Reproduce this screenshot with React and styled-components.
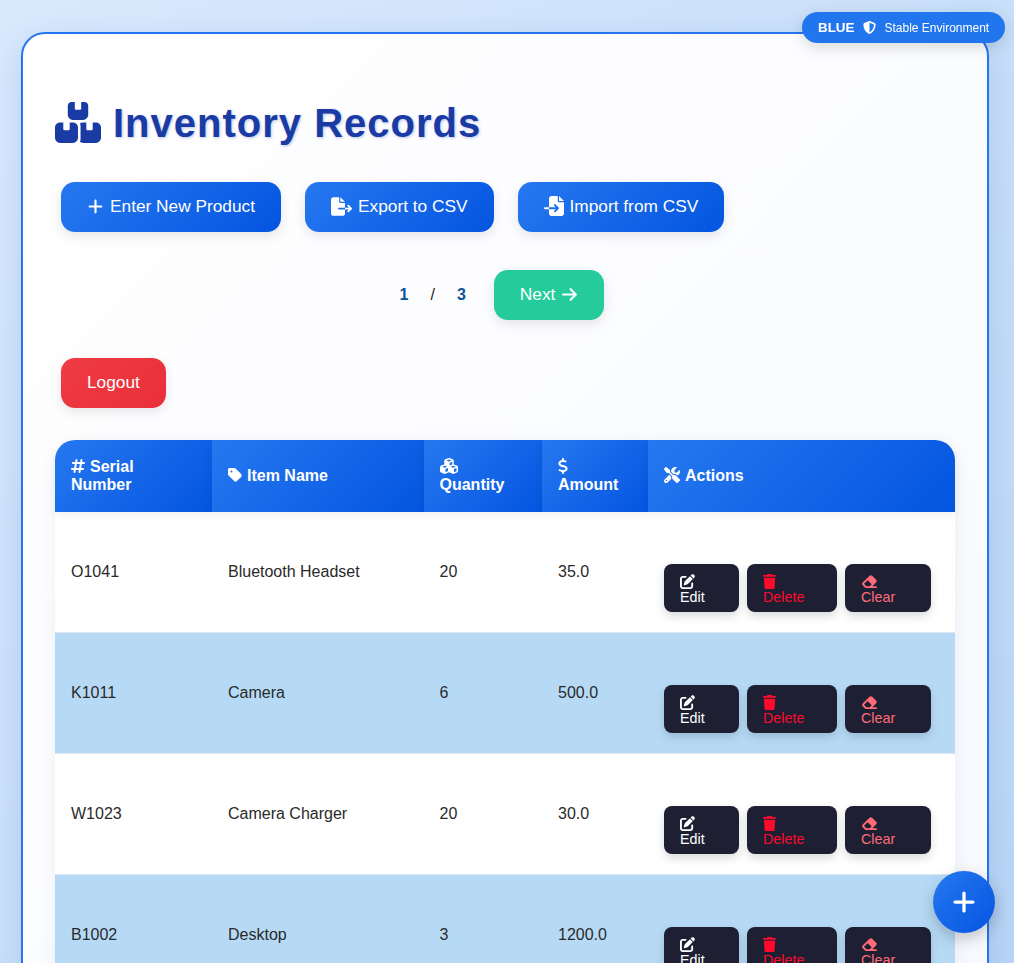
import React from "react";
import styled, { createGlobalStyle, css } from "styled-components";
import {
  FaBoxesStacked, FaPlus, FaFileExport, FaFileImport, FaArrowRight, FaHashtag, FaTag,
  FaCubes, FaDollarSign, FaScrewdriverWrench, FaPenToSquare, FaTrash, FaEraser, FaShieldHalved,
} from "react-icons/fa6";

const Global = createGlobalStyle`
  html, body { margin: 0; padding: 0; height: 100%; overflow: hidden; }
  body { font-family: "Liberation Sans", Arial, sans-serif; color: #222; }
  * { box-sizing: border-box; }
`;

const blue = "linear-gradient(135deg, #2678f0, #0455e0)";

/* react-icons gives every glyph a square box: widen it to the glyph's own proportions */
const glyphBox = (h) => css`
  svg { height: ${h}px; width: ${h}px; }
  svg[viewBox^="0 0 576"] { width: ${h * 1.125}px; }
  svg[viewBox^="0 0 448"] { width: ${h * 0.875}px; }
  svg[viewBox^="0 0 320"] { width: ${h * 0.625}px; }
`;

const Page = styled.div`
  height: 963px;
  overflow: hidden;
  padding: 32px 25px 0 21px;
  background: linear-gradient(135deg, #d9e9fd, #b9d6f6);
`;
const Card = styled.main`
  width: 968px;
  min-height: 1100px;
  padding: 66px 32px 32px;
  border: 2px solid #2575ee;
  border-radius: 24px;
  background: linear-gradient(135deg, #ffffff, #f7f9ff);
  box-shadow: 0 10px 30px rgba(30, 64, 175, 0.15);
`;
const Title = styled.h1`
  display: flex;
  align-items: center;
  gap: 12px;
  margin: 0 0 36px;
  height: 46px;
  font-size: 40px;
  font-weight: 700;
  letter-spacing: 1px;
  color: #1a3ba3;
  text-shadow: 1px 1px 3px rgba(30, 64, 175, 0.3);
  svg { width: 46px; height: 41px; margin-top: -2px; }
`;
const Toolbar = styled.div`
  display: flex;
  gap: 24px;
  padding-left: 6px;
`;
const Button = styled.button`
  display: inline-flex;
  align-items: center;
  justify-content: center;
  gap: 6px;
  height: 50px;
  padding: 0 26px 2px;
  border: 0;
  border-radius: 14px;
  font: 500 17.3px/22px "Liberation Sans", Arial, sans-serif;
  color: #fff;
  background: ${(p) => p.$bg || blue};
  box-shadow: 0 4px 12px rgba(0, 0, 0, 0.1);
`;
const Pager = styled.div`
  display: flex;
  align-items: center;
  justify-content: center;
  margin: 38px 0;
  padding-right: 6px;
`;
const PageNumber = styled.span`
  font-size: 16px;
  font-weight: 700;
  color: #0b5394;
`;
const Slash = styled.span`
  margin: 0 22px;
  font-size: 16px;
  color: #222;
`;
const NextButton = styled(Button)`
  margin-left: 28px;
`;
const LogoutRow = styled.div`
  padding-left: 6px;
  margin-bottom: 32px;
`;
const Table = styled.table`
  width: 900px;
  table-layout: fixed;
  border-collapse: separate;
  border-spacing: 0;
  background: #fff;
  border-radius: 20px 20px 0 0;
  box-shadow: 0 4px 20px rgba(0, 0, 0, 0.06);
`;
const Th = styled.th`
  position: relative;
  z-index: 1;
  width: ${(p) => p.$w}px;
  height: 72px;
  padding: 0 16px;
  text-align: left;
  font-size: 16px;
  line-height: 18px;
  font-weight: 700;
  color: #fff;
  background: ${blue};
  box-shadow: 0 4px 8px rgba(0, 0, 0, 0.06);
  &:first-child { border-top-left-radius: 20px; }
  &:last-child { border-top-right-radius: 20px; }
  ${glyphBox(16)}
  svg { vertical-align: -2px; margin-right: 5px; }
`;
const Tr = styled.tr`
  background: ${(p) => (p.$alt ? "#b6daf6" : "#fff")};
`;
const Td = styled.td`
  height: 121px;
  padding: 0 16px;
  font-size: 16px;
  color: #2a2a2a;
  border-bottom: 1px solid #dde6ee;
`;
const ActionGroup = styled.div`
  display: flex;
  gap: 8px;
  margin-top: 32px;
`;
const ActionButton = styled.button`
  width: ${(p) => p.$w}px;
  height: 48px;
  padding: 2px 0 0 16px;
  border: 0;
  border-radius: 8px;
  text-align: left;
  font: 14.3px/15px "Liberation Sans", Arial, sans-serif;
  color: ${(p) => p.$color};
  background: #1e1f33;
  box-shadow: 0 4px 10px rgba(0, 0, 0, 0.15);
  ${glyphBox(15)}
  svg { display: block; margin-bottom: 1px; }
`;
const Badge = styled.div`
  position: fixed;
  top: 12px;
  left: 802px;
  display: flex;
  align-items: center;
  width: 203px;
  height: 31px;
  padding-left: 16px;
  border-radius: 16px;
  background: #2176ee;
  color: #fff;
  box-shadow: 0 4px 15px rgba(0, 0, 0, 0.15);
`;
const BadgeName = styled.strong`
  font-size: 13.4px;
  margin-right: 9px;
`;
const BadgeText = styled.span`
  font-size: 12px;
  margin-left: 8px;
`;
const Fab = styled.button`
  position: fixed;
  left: 933px;
  top: 871px;
  display: flex;
  align-items: center;
  justify-content: center;
  width: 62px;
  height: 62px;
  border: 0;
  border-radius: 50%;
  color: #fff;
  background: ${blue};
  box-shadow: 0 6px 16px rgba(0, 0, 0, 0.22);
`;

const rows = [
  ["O1041", "Bluetooth Headset", "20", "35.0"],
  ["K1011", "Camera", "6", "500.0"],
  ["W1023", "Camera Charger", "20", "30.0"],
  ["B1002", "Desktop", "3", "1200.0"],
];

export default function App() {
  return (
    <Page>
      <Global />
      <Badge>
        <BadgeName>BLUE</BadgeName>
        <FaShieldHalved size={13} />
        <BadgeText>Stable Environment</BadgeText>
      </Badge>
      <Card>
        <Title><FaBoxesStacked />Inventory Records</Title>
        <Toolbar>
          <Button><FaPlus size={17} /> Enter New Product</Button>
          <Button><FaFileExport size={21} /> Export to CSV</Button>
          <Button><FaFileImport size={20} /> Import from CSV</Button>
        </Toolbar>
        <Pager>
          <PageNumber>1</PageNumber>
          <Slash>/</Slash>
          <PageNumber>3</PageNumber>
          <NextButton $bg="#25cb9b">Next <FaArrowRight size={17} /></NextButton>
        </Pager>
        <LogoutRow>
          <Button $bg="linear-gradient(135deg, #ef3b43, #e92f3b)">Logout</Button>
        </LogoutRow>
        <Table>
          <thead>
            <tr>
              <Th $w={157}><FaHashtag />Serial Number</Th>
              <Th $w={211.5}><FaTag />Item Name</Th>
              <Th $w={118.5}><FaCubes /><br />Quantity</Th>
              <Th $w={106}><FaDollarSign /><br />Amount</Th>
              <Th $w={307}><FaScrewdriverWrench />Actions</Th>
            </tr>
          </thead>
          <tbody>
            {rows.map((r, i) => (
              <Tr key={r[0]} $alt={i % 2 === 1}>
                {r.map((c) => <Td key={c}>{c}</Td>)}
                <Td>
                  <ActionGroup>
                    <ActionButton $w={75} $color="#fff"><FaPenToSquare />Edit</ActionButton>
                    <ActionButton $w={90} $color="#ff0a2c"><FaTrash />Delete</ActionButton>
                    <ActionButton $w={86} $color="#ff6b78"><FaEraser />Clear</ActionButton>
                  </ActionGroup>
                </Td>
              </Tr>
            ))}
          </tbody>
        </Table>
      </Card>
      <Fab><FaPlus size={26} /></Fab>
    </Page>
  );
}
